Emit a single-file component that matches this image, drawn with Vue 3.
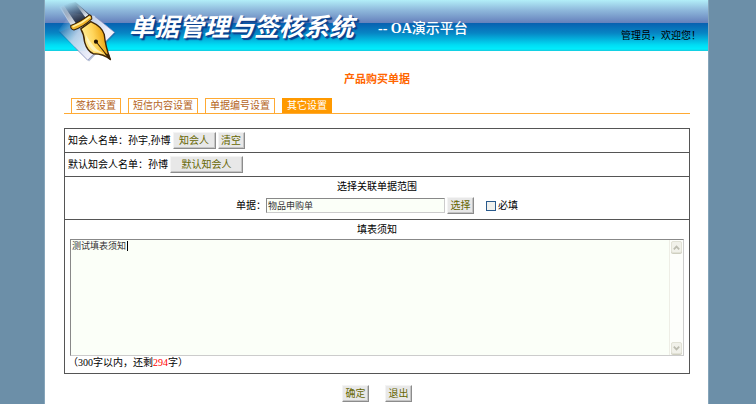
<script setup>
import { ref, computed } from 'vue'

const tabs = ['签核设置', '短信内容设置', '单据编号设置', '其它设置']
const activeTab = ref('其它设置')
const related = ref('物品申购单')
const required = ref(false)
const notice = ref('测试填表须知')
const remaining = computed(() => 300 - notice.value.length)
</script>

<template>
  <div class="page">
    <header class="banner">
      <svg class="logo" viewBox="50 5 174 180" aria-hidden="true">
        <defs>
          <linearGradient id="sheet" x1="0" y1="0.3" x2="0.7" y2="0.7">
            <stop offset="0" stop-color="#cfe6f6" stop-opacity="0" />
            <stop offset="0.45" stop-color="#cfdcf0" stop-opacity="0.85" />
            <stop offset="1" stop-color="#f1f1fb" />
          </linearGradient>
          <linearGradient id="barrel" x1="0" y1="0" x2="0.6" y2="1">
            <stop offset="0.15" stop-color="#10182c" stop-opacity="0" />
            <stop offset="1" stop-color="#0b1120" />
          </linearGradient>
          <linearGradient id="shine" x1="0" y1="0" x2="0.5" y2="1">
            <stop offset="0" stop-color="#ffffff" stop-opacity="0" />
            <stop offset="1" stop-color="#eef4fb" stop-opacity="0.9" />
          </linearGradient>
          <linearGradient id="gold" x1="0" y1="0.6" x2="1" y2="0.3">
            <stop offset="0" stop-color="#fff3a8" />
            <stop offset="0.45" stop-color="#ffd65c" />
            <stop offset="0.75" stop-color="#f0ac1c" />
            <stop offset="1" stop-color="#b86f08" />
          </linearGradient>
        </defs>
        <path d="M162 51 L220 99 L143 181 L56 96 Z" fill="#2c4a88" opacity="0.35" />
        <path d="M158 48 L217 96 L139 177 L54 90 L90 40 Z" fill="url(#sheet)" />
        <path d="M160 50 L217 96 L139 177 L100 138" fill="none" stroke="#8088b8" stroke-width="2" />
        <path d="M58 16 L104 8 L146 46 L93 80 Z" fill="url(#barrel)" />
        <path d="M56 22 L70 18 L106 72 L93 80 Z" fill="url(#shine)" />
        <path d="M104 14 L112 16 L142 46 L132 52 Z" fill="url(#shine)" />
        <path d="M119 86 L148 65 Q180 79 187 102 Q191 140 205 175 Q187 158 155 158 Q138 151 130 124 Q129 103 119 86 Z" fill="url(#gold)" stroke="#3f2605" stroke-width="4" stroke-linejoin="round" />
        <path d="M127 90 Q140 119 165 145 L194 163 Q169 153 157 151 Q141 137 136 119 Q135 103 127 90 Z" fill="#fff8cd" opacity="0.75" />
        <path d="M164 124 L204 174" stroke="#2c1903" stroke-width="3" />
        <circle cx="163" cy="123" r="6" fill="#241401" />
        <path d="M187 157 L206 177 L201 160 Z" fill="#3b2205" />
        <path d="M90 76 Q116 67 143 46 Q151 45 151 57 Q127 80 99 89 Q88 87 90 76 Z" fill="#f2b62d" stroke="#352007" stroke-width="3" />
        <path d="M97 79 Q124 69 144 52" fill="none" stroke="#fff0a0" stroke-width="5" stroke-linecap="round" />
      </svg>
      <h1 class="brand">单据管理与签核系统</h1>
      <span class="platform">-- OA<span class="demo">演示平台</span></span>
      <span class="welcome">管理员，欢迎您！</span>
    </header>

    <main class="content">
      <h2 class="title">产品购买单据</h2>

      <nav class="tabs">
        <a
          v-for="tab in tabs"
          :key="tab"
          href="#"
          class="tab"
          :class="{ active: tab === activeTab }"
          @click.prevent="activeTab = tab"
        >{{ tab }}</a>
      </nav>

      <form class="panel" @submit.prevent>
        <div class="row">
          <span>知会人名单：孙宇,孙博</span>
          <button type="button" class="btn mid">知会人</button>
          <button type="button" class="btn">清空</button>
        </div>
        <div class="row">
          <span>默认知会人名单：孙博</span>
          <button type="button" class="btn wide">默认知会人</button>
        </div>
        <div class="section">
          <div class="caption">选择关联单据范围</div>
          <div class="picker">
            <label for="related">单据：</label>
            <input id="related" v-model="related" type="text" class="text" />
            <button type="button" class="btn">选择</button>
            <label class="check"><input v-model="required" type="checkbox" />必填</label>
          </div>
        </div>
        <div class="section">
          <label class="caption" for="notice">填表须知</label>
          <div class="editor">
            <textarea id="notice" v-model="notice" maxlength="300"></textarea>
            <span class="caret"></span>
            <div class="scroll">
              <button type="button" class="arrow" aria-label="向上">
                <svg viewBox="0 0 10 10"><path d="M2 7 L5 4 L8 7" /></svg>
              </button>
              <button type="button" class="arrow" aria-label="向下">
                <svg viewBox="0 0 10 10"><path d="M2 3 L5 6 L8 3" /></svg>
              </button>
            </div>
          </div>
          <div class="count">（300字以内，还剩<em>{{ remaining }}</em>字）</div>
        </div>
      </form>

      <div class="actions">
        <button type="button" class="btn">确定</button>
        <button type="button" class="btn">退出</button>
      </div>
    </main>
  </div>
</template>

<style>
body {
  background: #6c8fa8;
}
</style>

<style scoped>
.page,
.page * {
  box-sizing: border-box;
}
.page {
  min-height: 100vh;
  margin: 0 48px 0 45px;
  background: #fff;
  box-shadow: 0 0 0 1px #86a5ba;
  color: #000;
  font: 10px/16px "Liberation Serif", "Noto Sans CJK SC", serif;
}
.banner {
  display: flex;
  align-items: flex-start;
  height: 51px;
  padding: 0 7px 0 12px;
  background: linear-gradient(#b2eef8 0, #8fb9dc 10px, #6580bb 23px, #0860b0 23px, #0785c4 33px, #00dcf4 45px, #00ecfc 49px, #18c8dc 51px);
}
.logo {
  flex: none;
  width: 60px;
  height: 62px;
  margin-top: 1px;
}
.brand {
  margin: 9px 0 0 12px;
  color: #fff;
  font: italic bold 25px/32px "Noto Sans CJK SC", sans-serif;
  text-shadow: 1px 1px 0 #0c4490, 2px 2px 1px #0c3f8c;
  white-space: nowrap;
}
.platform {
  margin: 19px 0 0 24px;
  color: #fff;
  font-size: 14px;
  font-weight: bold;
  line-height: 20px;
  white-space: nowrap;
}
.demo {
  font-weight: 500;
}
.welcome {
  margin: 28px 0 0 auto;
  white-space: nowrap;
}
.content {
  padding: 20px 18px 0 19px;
}
.title {
  margin: 0;
  color: #f60;
  font-size: 11px;
  line-height: 16px;
  text-align: center;
}
.tabs {
  display: flex;
  gap: 7px;
  margin-top: 11px;
  padding-left: 7px;
  border-bottom: 1px solid #fa3;
}
.tab {
  height: 15px;
  padding: 0 4px;
  border: 1px solid #fa3;
  border-bottom: 0;
  color: #b5651d;
  line-height: 14px;
  text-decoration: none;
  white-space: nowrap;
}
.tab.active {
  border-color: #f90;
  background: #f90;
  color: #fff;
}
.panel {
  margin-top: 14px;
  border: 1px solid #555;
}
.row {
  display: flex;
  align-items: center;
  gap: 2px;
  height: 24px;
  padding-left: 3px;
  border-bottom: 1px solid #555;
}
.section + .section {
  border-top: 1px solid #555;
}
.caption {
  display: block;
  padding-top: 2px;
  text-align: center;
}
.btn {
  height: 17px;
  min-width: 27px;
  padding: 0 2px;
  border: 1px solid;
  border-color: #f4f4f4 #8c8c8c #8c8c8c #f4f4f4;
  box-shadow: inset -1px -1px 0 #c4c4c4;
  background: #e8e8e8;
  color: #660;
  font: inherit;
  line-height: 14px;
  white-space: nowrap;
}
.btn.mid {
  min-width: 43px;
}
.btn.wide {
  min-width: 73px;
}
.picker {
  display: flex;
  align-items: center;
  justify-content: center;
  gap: 2px;
  padding: 2px 0 5px;
}
.picker .text {
  width: 179px;
  height: 15px;
  margin-left: -2px;
  padding: 0 1px;
  border: 1px solid;
  border-color: #888 #ccc #ccc #888;
  background: #fbfff8;
  color: #333;
  font: inherit;
  font-size: 9px;
}
.check {
  display: flex;
  align-items: center;
  gap: 2px;
  margin-left: 10px;
}
.check input {
  appearance: none;
  width: 10px;
  height: 10px;
  margin: 0;
  border: 1px solid #2a5a8c;
  background: #f0f1ee;
}
.check input:checked {
  background: #2a5a8c;
}
.editor {
  position: relative;
  display: flex;
  height: 117px;
  margin: 1px 5px 0;
  border: 1px solid;
  border-color: #888 #ccc #ccc #888;
  background: #fbfff8;
}
.editor textarea {
  flex: 1;
  min-width: 0;
  padding: 0 1px;
  border: 0;
  outline: 0;
  overflow: hidden;
  resize: none;
  background: transparent;
  color: #333;
  font: inherit;
  font-size: 9px;
  line-height: 12px;
}
.caret {
  position: absolute;
  top: 1px;
  left: 56px;
  width: 1px;
  height: 10px;
  background: #000;
}
.scroll {
  display: flex;
  flex-direction: column;
  justify-content: space-between;
  width: 14px;
  padding: 1px;
  border-left: 1px solid #eeeee6;
  background: #fdfefb;
}
.arrow {
  width: 11px;
  height: 12px;
  padding: 0;
  border: 1px solid #e2e2d6;
  border-radius: 2px;
  background: #f1f1ea;
  box-shadow: 0 1px 0 #cfcfc0;
}
.arrow svg {
  display: block;
  width: 9px;
  height: 9px;
}
.arrow path {
  fill: none;
  stroke: #bcbcb0;
  stroke-width: 2;
}
.count {
  padding: 0 0 4px 3px;
  line-height: 13px;
}
.count em {
  color: #f00;
  font-style: normal;
}
.actions {
  display: flex;
  justify-content: center;
  gap: 16px;
  margin-top: 11px;
}
</style>
